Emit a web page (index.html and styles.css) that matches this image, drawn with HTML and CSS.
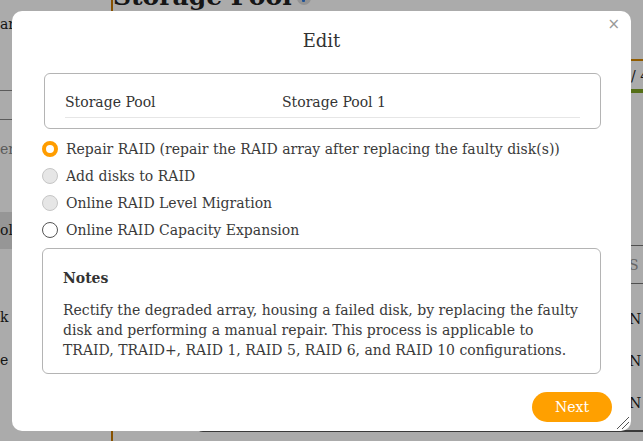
FILE: index.html
```html
<!DOCTYPE html>
<html>
<head>
<meta charset="utf-8">
<link rel="stylesheet" href="styles.css">
</head>
<body>
<div class="page">
  <aside class="sidebar">
    <div class="side-top"><span class="side-text">ar</span></div>
    <div class="side-search"></div>
    <div class="side-item muted">er</div>
    <div class="side-item gap"></div>
    <div class="side-item active">ol</div>
    <div class="side-item spaced">k</div>
    <div class="side-item spaced2">e</div>
  </aside>
  <main class="main">
    <h1 class="page-title">Storage Pool<span class="info-dot"><span class="info-bar"></span></span></h1>
    <div class="right-col">
      <div class="usage">
        <div class="usage-top"></div>
        <div class="usage-text">/ 4</div>
        <div class="usage-bar"></div>
      </div>
      <div class="table">
        <div class="thead">S</div>
        <div class="trow">N</div>
        <div class="trow">N</div>
        <div class="trow">N</div>
      </div>
    </div>
    <div class="bottom-box"></div>
  </main>
</div>

<div class="backdrop"></div>

<div class="modal">
  <button class="close" aria-label="close">×</button>
  <h2 class="modal-title">Edit</h2>

  <div class="info-box">
    <div class="info-row">
      <span class="info-label">Storage Pool</span>
      <span class="info-value">Storage Pool 1</span>
    </div>
  </div>

  <div class="options">
    <label class="option"><span class="radio checked"></span>Repair RAID (repair the RAID array after replacing the faulty disk(s))</label>
    <label class="option"><span class="radio disabled"></span>Add disks to RAID</label>
    <label class="option"><span class="radio disabled"></span>Online RAID Level Migration</label>
    <label class="option"><span class="radio"></span>Online RAID Capacity Expansion</label>
  </div>

  <div class="notes">
    <div class="notes-title">Notes</div>
    <p class="notes-text">Rectify the degraded array, housing a failed disk, by replacing the faulty disk and performing a manual repair. This process is applicable to TRAID, TRAID+, RAID 1, RAID 5, RAID 6, and RAID 10 configurations.</p>
  </div>

  <div class="footer">
    <button class="next">Next</button>
  </div>

  <svg class="grip" width="14" height="14" viewBox="0 0 14 14">
    <line x1="1" y1="13" x2="13" y2="1" stroke="#555" stroke-width="1"/>
    <line x1="6" y1="13" x2="13" y2="6" stroke="#555" stroke-width="1"/>
  </svg>
</div>
</body>
</html>
```

FILE: styles.css
```css
* { box-sizing: border-box; }
html, body { margin: 0; padding: 0; }
body {
  width: 643px;
  height: 441px;
  overflow: hidden;
  font-family: "DejaVu Serif", serif;
  color: #333;
  background: #fff;
}

/* ---------- background page ---------- */
.page {
  display: grid;
  grid-template-columns: 112px 1fr;
  height: 441px;
}
.sidebar {
  display: flex;
  flex-direction: column;
  font-size: 14px;
  color: #222;
}
.side-top {
  height: 91px;
  padding-top: 16px;
  border-bottom: 1px solid #888;
}
.side-search {
  height: 29px;
  border-bottom: 1px solid #888;
}
.side-item {
  height: 37px;
  line-height: 37px;
}
.side-item.muted { color: #888; margin-top: 11px; }
.side-item.gap { height: 44px; }
.side-item.active { background: #e0e0e0; }
.side-item.spaced { margin-top: 50px; }
.side-item.spaced2 { margin-top: 6px; }

.main {
  display: flex;
  flex-direction: column;
  border-left: 2px solid #c97a00;
  margin-left: -1px;
}
.page-title {
  margin: -19px 0 0 0;
  font-size: 25px;
  font-weight: bold;
  color: #222;
  display: flex;
  align-items: center;
  gap: 5px;
  height: 30px;
}
.info-dot {
  width: 14px;
  height: 14px;
  border-radius: 50%;
  background: #dcdcdc;
  margin-top: 4px;
  display: flex;
  justify-content: center;
  padding-top: 3px;
}
.info-bar {
  width: 3px;
  height: 8px;
  background: #2f7be0;
  border-radius: 1px;
}
.right-col {
  margin-left: auto;
  width: 14px;
  margin-top: 48px;
  font-size: 14px;
}
.usage-top { height: 2px; background: #d88a00; }
.usage-text { height: 28px; line-height: 30px; color: #222; padding-left: 2px; white-space: nowrap; }
.usage-bar { height: 4px; background: #7fa623; }
.table { margin-top: 152px; }
.thead {
  height: 39px;
  line-height: 38px;
  color: #999;
  border-top: 1px solid #777;
  border-bottom: 1px solid #777;
}
.trow { height: 42px; line-height: 70px; color: #222; }
.bottom-box {
  margin-top: auto;
  margin-left: 82px;
  margin-bottom: 9px;
  height: 12px;
  border-bottom: 2px solid #555;
  border-left: 1px solid #555;
  border-bottom-left-radius: 8px;
}

.backdrop {
  position: fixed;
  inset: 0;
  background: rgba(0, 0, 0, 0.33);
}

/* ---------- modal ---------- */
.modal {
  position: fixed;
  left: 12px;
  top: 11px;
  width: 619px;
  height: 420px;
  background: #fff;
  border-radius: 10px;
  padding: 18px 30px 0 30px;
  display: flex;
  flex-direction: column;
}
.close {
  position: absolute;
  top: 4px;
  right: 11px;
  border: 0;
  background: none;
  padding: 0;
  font-family: "DejaVu Sans", sans-serif;
  font-size: 15px;
  color: #999;
  line-height: 18px;
}
.modal-title {
  margin: 0;
  text-align: center;
  font-size: 18px;
  font-weight: normal;
  line-height: 24px;
  color: #333;
}

.info-box {
  margin: 20px 0 0 2px;
  height: 56px;
  border: 1px solid #b4b4b4;
  border-radius: 6px;
  padding: 18px 20px 0 20px;
}
.info-row {
  display: flex;
  font-size: 14px;
  line-height: 20px;
  padding-bottom: 5px;
  border-bottom: 1px solid #e6e6e6;
  color: #333;
}
.info-label { width: 217px; }

.options {
  margin-top: 6px;
  display: flex;
  flex-direction: column;
}
.option {
  display: flex;
  align-items: center;
  height: 27px;
  font-size: 14px;
  color: #3a3a3a;
}
.radio {
  width: 16px;
  height: 16px;
  border-radius: 50%;
  border: 1px solid #555;
  background: #fff;
  margin-right: 8px;
  flex: none;
}
.radio.checked {
  border: 4px solid #ff9d00;
}
.radio.disabled {
  background: #e6e6e6;
  border-color: #c6c6c6;
}

.notes {
  margin-top: 5px;
  height: 126px;
  border: 1px solid #b4b4b4;
  border-radius: 6px;
  padding: 19px 20px 0 20px;
}
.notes-title {
  font-size: 14px;
  font-weight: bold;
  line-height: 20px;
  color: #333;
}
.notes-text {
  margin: 12px 0 0 0;
  font-size: 14px;
  line-height: 20px;
  color: #3a3a3a;
}

.footer {
  display: flex;
  justify-content: flex-end;
  margin: 18px -11px 0 0;
}
.next {
  width: 80px;
  height: 30px;
  border: 0;
  border-radius: 15px;
  background: #ffa000;
  color: #fff;
  font-family: "DejaVu Serif", serif;
  font-size: 14px;
  padding: 0;
}
.grip {
  position: absolute;
  right: 1px;
  bottom: 1px;
}
```
